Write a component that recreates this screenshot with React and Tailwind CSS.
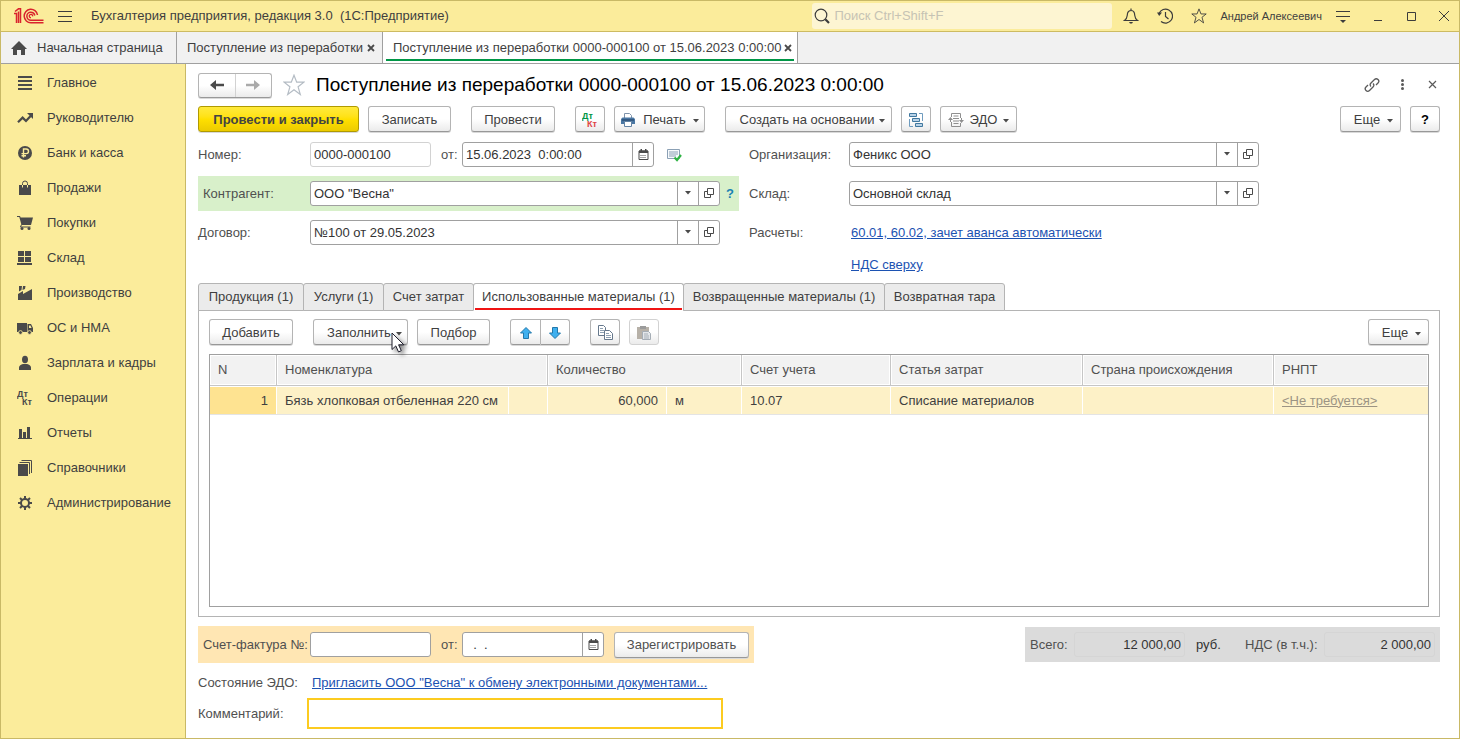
import { clsx } from 'clsx'

const sections = [
  { icon: MenuLinesIcon, label: 'Главное' },
  { icon: TrendIcon, label: 'Руководителю' },
  { icon: RubleIcon, label: 'Банк и касса' },
  { icon: BagIcon, label: 'Продажи' },
  { icon: CartIcon, label: 'Покупки' },
  { icon: BoxesIcon, label: 'Склад' },
  { icon: FactoryIcon, label: 'Производство' },
  { icon: TruckIcon, label: 'ОС и НМА' },
  { icon: PersonIcon, label: 'Зарплата и кадры' },
  { icon: DtKtIcon, label: 'Операции' },
  { icon: ChartIcon, label: 'Отчеты' },
  { icon: BooksIcon, label: 'Справочники' },
  { icon: GearIcon, label: 'Администрирование' },
]

const docTabs = [
  { label: 'Продукция (1)', width: 'w-[106px]' },
  { label: 'Услуги (1)', width: 'w-[81px]' },
  { label: 'Счет затрат', width: 'w-[91px]' },
  { label: 'Использованные материалы (1)', width: 'w-[211px]', active: true },
  { label: 'Возвращенные материалы (1)', width: 'w-[202px]' },
  { label: 'Возвратная тара', width: 'w-[121px]' },
]

/* ---------- Icons ---------- */

function Icon({ size = 16, children, className }) {
  return (
    <svg width={size} height={size} viewBox={`0 0 ${size} ${size}`} className={clsx('shrink-0', className)} fill="none" aria-hidden="true">
      {children}
    </svg>
  )
}

function MenuLinesIcon() {
  return <Icon><path d="M1 1h14v2H1zM1 5h14v2H1zM1 9h14v2H1zM1 13h14v2H1z" fill="#4a4a4a" /></Icon>
}

function TrendIcon() {
  return (
    <Icon>
      <path d="M1 12.2l4.6-4.6 3.4 3.4 4.6-5" stroke="#4a4a4a" strokeWidth="2.2" />
      <path d="M10 3h6v6z" fill="#4a4a4a" />
    </Icon>
  )
}

function RubleIcon() {
  return (
    <Icon>
      <circle cx="8" cy="8" r="7" fill="#4a4a4a" />
      <path d="M6.5 12.5V4h2.7a2.2 2.2 0 010 4.6H4.5M4.5 10.7H9" stroke="#fbec9b" strokeWidth="1.4" />
    </Icon>
  )
}

function BagIcon() {
  return (
    <Icon>
      <path d="M2 5h12v10H2z" fill="#4a4a4a" />
      <path d="M5.500 7V3.500a2.500 2.500 0 015 0V7" stroke="#4a4a4a" />
      <path d="M5.500 5v2.500M10.500 5v2.500" stroke="#fbec9b" />
    </Icon>
  )
}

function CartIcon() {
  return (
    <Icon>
      <path d="M0 1h3l.6 1.500H16L14 10H4.500L2.300 2H0z" fill="#4a4a4a" />
      <path d="M4.500 9.500L3.500 12h10" stroke="#4a4a4a" />
      <circle cx="5" cy="13.500" r="1.500" fill="#4a4a4a" />
      <circle cx="12" cy="13.500" r="1.500" fill="#4a4a4a" />
    </Icon>
  )
}

function BoxesIcon() {
  return <Icon><path d="M1 1h6v5H1zM8 1h6v5H8zM1 7h6v5H1zM8 7h6v5H8zM0 13h15v2H0z" fill="#4a4a4a" /></Icon>
}

function FactoryIcon() {
  return <Icon><path d="M1 15V9l5-3v3l9-5v11zM2 1h3l-.500 4L2 6.500zM6 1h2.500L8 4 5.500 5z" fill="#4a4a4a" /></Icon>
}

function TruckIcon() {
  return (
    <Icon>
      <path d="M0 3h10v9H0zM10.500 4H14l2 4v4h-5.500z" fill="#4a4a4a" />
      <path d="M12 5.500h1.500L14.600 8H12z" fill="#fbec9b" />
      <circle cx="3.500" cy="12.500" r="1.900" fill="#4a4a4a" stroke="#fbec9b" strokeWidth=".8" />
      <circle cx="12.500" cy="12.500" r="1.900" fill="#4a4a4a" stroke="#fbec9b" strokeWidth=".8" />
    </Icon>
  )
}

function PersonIcon() {
  return (
    <Icon>
      <ellipse cx="8" cy="4.500" rx="3" ry="3.800" fill="#4a4a4a" />
      <path d="M2 15v-2.500C2 10.500 4 9.800 6 9h4c2 .8 4 1.500 4 3.500V15z" fill="#4a4a4a" />
    </Icon>
  )
}

function DtKtIcon({ dt = '#4a4a4a', kt = '#4a4a4a' }) {
  return (
    <Icon>
      <text x="0" y="7" fontSize="9" fontWeight="bold" fill={dt}>Дт</text>
      <text x="5" y="15" fontSize="9" fontWeight="bold" fill={kt}>Кт</text>
    </Icon>
  )
}

function ChartIcon() {
  return <Icon><path d="M2 4h3v9h1V7h3v6h1V2h3v11h2v1H1v-1h1z" fill="#4a4a4a" /></Icon>
}

function BooksIcon() {
  return (
    <Icon>
      <path d="M1 4h10v12H1z" fill="#4a4a4a" />
      <path d="M2.500 2.500h10V14M4.500.500h10V13" stroke="#4a4a4a" />
    </Icon>
  )
}

function GearIcon() {
  return (
    <Icon>
      <circle cx="8" cy="8" r="4" stroke="#4a4a4a" strokeWidth="2" />
      <path d="M8 1v3M8 12v3M1 8h3M12 8h3M3 3l2 2M11 11l2 2M3 13l2-2M11 5l2-2" stroke="#4a4a4a" strokeWidth="2" />
    </Icon>
  )
}

function Logo() {
  return (
    <svg width="30" height="16" viewBox="0 0 30 16" fill="none" stroke="#d9232e" aria-label="1С">
      <path d="M0 5.500h2.500V15M1 3.500L4.500.800h2V15M4.500 3.500V15" strokeWidth="1.500" />
      <path d="M23.500 7a6.700 6.700 0 10-6.500 7.700h12.500" strokeWidth="1.500" />
      <path d="M20.800 7.500a4 4 0 10-3.800 4.700h12.500" strokeWidth="1.500" />
      <path d="M18.600 8.400a1.700 1.700 0 10-1.600 1.300" strokeWidth="1.300" />
    </svg>
  )
}

function StarIcon({ size, stroke }) {
  return (
    <svg width={size} height={size} viewBox="0 0 22 22" fill="none" className="shrink-0" aria-hidden="true">
      <path d="M11 1.200l2.700 7h7.200l-5.800 4.600 2.200 7.700-6.300-4.700-6.300 4.700 2.200-7.700L1.100 8.200h7.200z" stroke={stroke} strokeWidth="1.200" />
    </svg>
  )
}

function Caret({ className }) {
  return (
    <svg width="6" height="4" viewBox="0 0 6 4" className={clsx('shrink-0', className)} aria-hidden="true">
      <path d="M0 0h6L3 3.500z" fill="#4a4a4a" />
    </svg>
  )
}

function CalendarIcon() {
  return (
    <Icon size={11}>
      <path d="M1 2h9v8.500H1z" stroke="#4a4a4a" />
      <path d="M1 1.500h9V4H1zM2.500 0h1.500v2H2.500zM7 0h1.500v2H7z" fill="#4a4a4a" />
      <path d="M2.500 6.500h6M2.500 8.500h6" stroke="#4a4a4a" strokeDasharray="1 1" />
    </Icon>
  )
}

function OpenIcon() {
  return (
    <Icon size={10}>
      <path d="M3.500.500h6v6h-6zM3 3.500H.500v6h6V7" stroke="#4a4a4a" />
    </Icon>
  )
}

function PrinterIcon() {
  return (
    <Icon>
      <path d="M4.500 6V1.500h5l2 2V6" fill="#fff" stroke="#7f93aa" />
      <path d="M2.500 5.500h11L15 7v5H1V7z" fill="#4a77a3" />
      <path d="M2 8h12" stroke="#1f3f63" />
      <path d="M4.500 9.500h7v5h-7z" fill="#fff" stroke="#6484a5" />
    </Icon>
  )
}

function StructureIcon() {
  return (
    <Icon>
      <path d="M1.500 1.500h7v3h-7zM4.500 6.500h7v3h-7zM7.500 11.500h7v3h-7z" fill="#b9d3e8" stroke="#41789f" />
      <path d="M11 1.500h3.500V9M1.500 7v7.500H5" stroke="#6f9cbf" />
    </Icon>
  )
}

function ExchangeIcon() {
  return (
    <Icon>
      <path d="M3.500 5V1.500h9V6M3.500 10v4.500h9V11M5.500 4h5M5 6.500h6M5 9h6M5.500 11.500h5" stroke="#8f8f8f" />
      <path d="M0 8l2.500-3L5 8zM11 8h5l-2.500 3z" fill="#8f8f8f" />
      <path d="M2.500 7v3M13.500 6v3" stroke="#8f8f8f" />
    </Icon>
  )
}

function PostedIcon() {
  return (
    <Icon>
      <path d="M1.500 2.500h12v9h-12z" fill="#f7fafc" stroke="#8ba0b5" />
      <path d="M3 5h9M3 7h9M3 9h7" stroke="#8ba0b5" />
      <path d="M8.500 10.500l2.500 2.500 4-5" stroke="#2fb344" strokeWidth="2.200" />
    </Icon>
  )
}

function ArrowIcon({ down }) {
  return (
    <Icon size={14}>
      <path
        d={down ? 'M7 12.500L1.500 7h3V1.500h5V7h3z' : 'M7 1.500L1.500 7h3v5.500h5V7h3z'}
        fill="#3fb0ef"
        stroke="#2378ab"
      />
    </Icon>
  )
}

function CopyIcon() {
  return (
    <Icon>
      <path d="M1.500.500h5l2 2v8h-7z" fill="#fff" stroke="#66788c" />
      <path d="M3 3.500h3M3 5.500h4M3 7.500h4" stroke="#8fa1b3" />
      <path d="M7.500 5.500h5l3 3v6h-8z" fill="#fff" stroke="#66788c" />
      <path d="M9 8.500h3M9 10.500h5M9 12.500h5" stroke="#8fa1b3" />
    </Icon>
  )
}

function PasteIcon() {
  return (
    <Icon>
      <path d="M1 2h12v12H1z" fill="#b7b1a8" />
      <path d="M4 1h6v3H4z" fill="#9b9b9b" />
      <path d="M6.500 6.500h6l2 2v6h-8z" fill="#e4e7ea" stroke="#a5adb5" />
      <path d="M8 9h4M8 11h5M8 13h5" stroke="#a5adb5" />
    </Icon>
  )
}

function MousePointer() {
  return (
    <svg width="18" height="24" viewBox="0 0 18 24" className="pointer-events-none absolute -right-0.5 top-3 drop-shadow-[3px_3px_2px_rgba(0,0,0,0.45)]" aria-hidden="true">
      <path d="M1 1v16.500l3.800-3.600 2.700 6 2.800-1.200-2.700-5.900h5.200z" fill="#fff" stroke="#1d1d2b" />
    </svg>
  )
}

/* ---------- Controls ---------- */

function Button({ children, className, label, disabled }) {
  return (
    <button
      type="button"
      aria-label={label}
      disabled={disabled}
      className={clsx(
        'flex h-[26px] shrink-0 items-center justify-center rounded-[3px] border pt-px whitespace-nowrap',
        'bg-linear-to-b from-white from-50% to-[#ebebeb]',
        disabled ? 'border-[#d2d2d2]' : 'border-[#b4b4b4] border-b-[#989898] shadow-[0_1px_0_#d9d9d9]',
        className,
      )}
    >
      {children}
    </button>
  )
}

function FieldButton({ label, children }) {
  return (
    <button type="button" aria-label={label} className="flex w-[21px] shrink-0 items-center justify-center border-l border-[#a0a0a0] pb-px">
      {children}
    </button>
  )
}

function Field({ id, value, className, children }) {
  return (
    <div className={clsx('flex h-[25px] shrink-0 overflow-hidden rounded-[3px] border bg-white', className)}>
      <input id={id} defaultValue={value} className="min-w-0 flex-1 px-[3px] text-[#333] outline-none" />
      {children}
    </div>
  )
}

function LookupField({ id, value }) {
  return (
    <Field id={id} value={value} className="w-[410px] border-[#a0a0a0]">
      <FieldButton label="Выбрать"><Caret /></FieldButton>
      <FieldButton label="Открыть"><OpenIcon /></FieldButton>
    </Field>
  )
}

function DateField(props) {
  return (
    <Field {...props}>
      <FieldButton label="Календарь"><CalendarIcon /></FieldButton>
    </Field>
  )
}

/* ---------- Page parts ---------- */

function TitleBar() {
  return (
    <header className="flex h-[31px] shrink-0 items-center border-b border-[#cdbb62] bg-[#fbec9b] pl-[13px] pr-[7px]">
      <Logo />
      <button type="button" aria-label="Меню" className="ml-[13px]">
        <Icon><path d="M1 3.500h14M1 8.500h14M1 13.500h14" stroke="#3c3c3c" /></Icon>
      </button>
      <h1 className="ml-[18px] flex-1 whitespace-pre">Бухгалтерия предприятия, редакция 3.0  (1С:Предприятие)</h1>
      <label className="flex h-[26px] w-[300px] items-center gap-1 rounded-[3px] bg-[#fdf5d2] pl-[2px]">
        <Icon>
          <circle cx="7" cy="7" r="5.800" stroke="#3c3c3c" strokeWidth="1.200" />
          <path d="M11.300 11.300l3.700 3.700" stroke="#3c3c3c" strokeWidth="2.200" />
        </Icon>
        <input aria-label="Поиск" placeholder="Поиск Ctrl+Shift+F" className="min-w-0 flex-1 outline-none placeholder:text-[#c6c3b4]" />
      </label>
      <div className="ml-[11px] flex items-center gap-[18px]">
        <button type="button" aria-label="Уведомления">
          <Icon>
            <path d="M1.500 12.500c3-2 2.500-4 3-7C4.800 3.500 6 2.500 8 2.500s3.200 1 3.500 3c.5 3 0 5 3 7zM8 .500v2" stroke="#3c3c3c" strokeWidth="1.200" />
            <path d="M6 14h4l-1 1.500H7z" fill="#3c3c3c" />
          </Icon>
        </button>
        <button type="button" aria-label="История">
          <Icon>
            <path d="M2 5.500a7 7 0 112 8M8.500 4v4.500l3 2.500" stroke="#3c3c3c" strokeWidth="1.200" />
            <path d="M0 4.500h5L2.200 8z" fill="#3c3c3c" />
          </Icon>
        </button>
        <button type="button" aria-label="Избранное"><StarIcon size={16} stroke="#3c3c3c" /></button>
      </div>
      <span className="ml-[13px] text-[11px]">Андрей Алексеевич</span>
      <button type="button" aria-label="Настройки" className="ml-[13px]">
        <Icon>
          <path d="M1 3.500h14M1 8.500h14" stroke="#3c3c3c" />
          <path d="M5 12h6l-3 3z" fill="#3c3c3c" />
        </Icon>
      </button>
      <div className="ml-[19px] flex items-center gap-[17px]">
        <button type="button" aria-label="Свернуть"><Icon><path d="M4 12.500h8" stroke="#3c3c3c" /></Icon></button>
        <button type="button" aria-label="Развернуть"><Icon><path d="M4.500 4.500h8v8h-8z" stroke="#3c3c3c" /></Icon></button>
        <button type="button" aria-label="Закрыть"><Icon><path d="M3 3l10 10M13 3L3 13" stroke="#3c3c3c" /></Icon></button>
      </div>
    </header>
  )
}

function CloseTab() {
  return (
    <button type="button" aria-label="Закрыть вкладку" className="ml-auto">
      <Icon size={8}><path d="M1 1l6 6M7 1L1 7" stroke="#4a4a4a" strokeWidth="1.800" /></Icon>
    </button>
  )
}

function WindowTabs() {
  return (
    <nav className="flex h-8 shrink-0 border-b border-[#a0a0a0] bg-[#f1f1f1] whitespace-nowrap">
      <div className="flex w-[176px] items-center border-r border-[#a0a0a0] pl-[10px]">
        <Icon>
          <path d="M8 1L0 9h2v6h4v-5h4v5h4V9h2z" fill="#4a4a4a" />
        </Icon>
        <a href="#home" className="ml-[10px]">Начальная страница</a>
      </div>
      <div className="flex w-[206px] items-center border-r border-[#a0a0a0] pl-[10px] pr-[7px]">
        <a href="#list">Поступление из переработки</a>
        <CloseTab />
      </div>
      <div className="flex w-[415px] flex-col border-r border-[#a0a0a0] bg-white px-[3px] pb-[2px]">
        <div className="flex flex-1 items-center border-b-2 border-[#009646] pl-[7px] pr-[2px] pt-1">
          <a href="#doc">Поступление из переработки 0000-000100 от 15.06.2023 0:00:00</a>
          <CloseTab />
        </div>
      </div>
    </nav>
  )
}

function Sidebar() {
  return (
    <aside className="w-[185px] shrink-0 border-r border-[#c9b966] bg-[#fbec9b] pt-px">
      {sections.map(({ icon: SectionIcon, label }) => (
        <a key={label} href="#section" className="flex h-[35px] items-center gap-[14px] pl-4">
          <SectionIcon />
          <span>{label}</span>
        </a>
      ))}
    </aside>
  )
}

function DocHeader() {
  return (
    <div className="flex h-[26px] items-center">
      <div className="flex h-[25px] w-[74px] rounded-[3px] border border-[#b4b4b4] border-b-[#989898] bg-linear-to-b from-white from-50% to-[#ebebeb] shadow-[0_1px_0_#d9d9d9]">
        <button type="button" aria-label="Назад" className="flex flex-1 items-center justify-center border-r border-[#d2d2d2]">
          <Icon><path d="M1 8l6-5v3.700h8v2.600H7V13z" fill="#4a4a4a" /></Icon>
        </button>
        <button type="button" aria-label="Вперед" className="flex flex-1 items-center justify-center">
          <Icon><path d="M15 8L9 3v3.700H1v2.600h8V13z" fill="#aaa" /></Icon>
        </button>
      </div>
      <button type="button" aria-label="В избранное" className="ml-[11px]"><StarIcon size={22} stroke="#b4bcc4" /></button>
      <h2 className="ml-[11px] flex-1 text-[19px] text-black">Поступление из переработки 0000-000100 от 15.06.2023 0:00:00</h2>
      <div className="flex items-center gap-[14px]">
        <button type="button" aria-label="Ссылка">
          <Icon>
            <path d="M7 9.500c-1-1-1-2.500 0-3.500l3.500-3.500c1-1 2.500-1 3.500 0s1 2.500 0 3.500L12 8M9 6.500c1 1 1 2.500 0 3.500l-3.500 3.500c-1 1-2.500 1-3.500 0s-1-2.500 0-3.500L4 8" stroke="#5a5a5a" strokeWidth="1.300" />
          </Icon>
        </button>
        <button type="button" aria-label="Действия">
          <Icon>
            <circle cx="8.500" cy="3.500" r="1.500" fill="#5a5a5a" />
            <circle cx="8.500" cy="7.500" r="1.500" fill="#5a5a5a" />
            <circle cx="8.500" cy="11.500" r="1.500" fill="#5a5a5a" />
          </Icon>
        </button>
        <button type="button" aria-label="Закрыть документ">
          <Icon><path d="M5 4l7 7M12 4l-7 7" stroke="#5a5a5a" strokeWidth="1.200" /></Icon>
        </button>
      </div>
    </div>
  )
}

function CommandBar() {
  return (
    <div className="mt-2 flex gap-[9px]">
      <button
        type="button"
        className="h-[26px] w-[161px] shrink-0 rounded-[3px] border border-[#b09a00] bg-linear-to-b from-[#ffea3a] via-[#ffe000] to-[#eccb00] pt-px font-bold text-[#434343] shadow-[0_1px_0_#d9d9d9]"
      >
        Провести и закрыть
      </button>
      <Button className="w-[83px]">Записать</Button>
      <Button className="ml-[11px] w-[84px]">Провести</Button>
      <Button className="ml-[11px] w-[30px]" label="Проводки"><DtKtIcon dt="#009646" kt="#e04545" /></Button>
      <Button className="w-[91px] gap-[7px]"><PrinterIcon />Печать<Caret className="mt-0.5" /></Button>
      <Button className="ml-[11px] w-[167px] gap-[5px] pl-2">Создать на основании<Caret className="mt-0.5" /></Button>
      <Button className="w-[30px]" label="Структура подчиненности"><StructureIcon /></Button>
      <Button className="w-[77px] gap-[6px]"><ExchangeIcon />ЭДО<Caret className="mt-0.5" /></Button>
      <Button className="ml-auto w-[61px] gap-[7px] pl-[6px]">Еще<Caret className="mt-0.5" /></Button>
      <Button className="w-[30px] font-bold text-black" label="Справка">?</Button>
    </div>
  )
}

function DocFields() {
  return (
    <div className="mt-[10px] flex gap-[10px] text-[#505050]">
      <div className="flex w-[541px] shrink-0 flex-col gap-[9px]">
        <div className="flex items-center">
          <label htmlFor="number" className="w-28">Номер:</label>
          <Field id="number" value="0000-000100" className="w-[121px] border-[#d2d2d2]" />
          <label htmlFor="date" className="w-[31px] pl-[10px]">от:</label>
          <DateField id="date" value="15.06.2023  0:00:00" className="w-[192px] border-[#a0a0a0]" />
          <span className="ml-3"><PostedIcon /></span>
        </div>
        <div className="flex h-[35px] items-center bg-[#d8f0ca] pl-[5px]">
          <label htmlFor="partner" className="w-[107px]">Контрагент:</label>
          <LookupField id="partner" value='ООО "Весна"' />
          <button type="button" className="ml-[6px] font-bold text-[#1a82b4]">?</button>
        </div>
        <div className="flex items-center">
          <label htmlFor="contract" className="w-28">Договор:</label>
          <LookupField id="contract" value="№100 от 29.05.2023" />
        </div>
      </div>
      <div className="flex flex-col gap-[14px]">
        <div className="flex items-center">
          <label htmlFor="company" className="w-[100px]">Организация:</label>
          <LookupField id="company" value="Феникс ООО" />
        </div>
        <div className="flex items-center">
          <label htmlFor="store" className="w-[100px]">Склад:</label>
          <LookupField id="store" value="Основной склад" />
        </div>
        <div className="flex leading-[25px]">
          <span className="w-[102px]">Расчеты:</span>
          <div className="flex flex-col items-start gap-[7px]">
            <a href="#settlements" className="text-[#1c52b2] underline">60.01, 60.02, зачет аванса автоматически</a>
            <a href="#vat" className="text-[#1c52b2] underline">НДС сверху</a>
          </div>
        </div>
      </div>
    </div>
  )
}

const headCell = 'border-r border-b border-[#c6c6c6] bg-[#f2f2f2] px-2 text-left font-normal text-[#505050] shadow-[inset_0_0_0_1px_#fff] last:border-r-0'
const bodyCell = 'border-r border-t border-white bg-[#fdf1c7] px-2 whitespace-nowrap last:border-r-0'

function MaterialsTable() {
  return (
    <div className="mt-[9px] min-h-24 flex-1 overflow-hidden border border-[#a0a0a0] bg-white">
      <table className="w-full table-fixed border-separate border-spacing-0">
        <colgroup>
          <col className="w-[67px]" />
          <col className="w-[232px]" />
          <col className="w-[39px]" />
          <col className="w-[119px]" />
          <col className="w-[75px]" />
          <col className="w-[149px]" />
          <col className="w-[192px]" />
          <col className="w-[191px]" />
          <col />
        </colgroup>
        <thead>
          <tr className="h-[31px]">
            <th className={headCell}>N</th>
            <th className={headCell} colSpan={2}>Номенклатура</th>
            <th className={headCell} colSpan={2}>Количество</th>
            <th className={headCell}>Счет учета</th>
            <th className={headCell}>Статья затрат</th>
            <th className={headCell}>Страна происхождения</th>
            <th className={headCell}>РНПТ</th>
          </tr>
        </thead>
        <tbody>
          <tr className="h-[28px]">
            <td className="border-r border-t border-white bg-[#fee391] px-2 text-right">1</td>
            <td className={bodyCell}>Бязь хлопковая отбеленная 220 см</td>
            <td className={bodyCell} />
            <td className={clsx(bodyCell, 'text-right')}>60,000</td>
            <td className={bodyCell}>м</td>
            <td className={bodyCell}>10.07</td>
            <td className={bodyCell}>Списание материалов</td>
            <td className={bodyCell} />
            <td className={bodyCell}><a href="#rnpt" className="text-[#9c9484] underline">&lt;Не требуется&gt;</a></td>
          </tr>
        </tbody>
      </table>
      <div className="border-t border-[#e4e4e4]" />
    </div>
  )
}

function MaterialsPanel() {
  return (
    <section className="mt-[6px] flex flex-1 flex-col">
      <div role="tablist" className="flex items-end whitespace-nowrap">
        {docTabs.map(({ label, width, active }) => (
          <button
            key={label}
            type="button"
            role="tab"
            aria-selected={Boolean(active)}
            className={clsx(
              'z-10 -mb-px -mr-px h-7 rounded-t-[3px] border border-[#b4b4b4]',
              width,
              active ? 'border-b-white bg-white px-px' : 'bg-[#ebebeb]',
            )}
          >
            {active ? <span className="flex h-full items-center justify-center border-b-2 border-[#f01414] pt-[2px]">{label}</span> : label}
          </button>
        ))}
      </div>
      <div className="flex flex-1 flex-col border border-[#b4b4b4] px-[10px] pb-[9px] pt-2">
        <div className="flex gap-[9px]">
          <Button className="w-[84px]">Добавить</Button>
          <Button className="relative ml-[11px] w-[95px] gap-[5px] pl-2">
            Заполнить<Caret className="mt-0.5" />
            <MousePointer />
          </Button>
          <Button className="w-[73px]">Подбор</Button>
          <div className="ml-[11px] flex">
            <Button className="w-[31px] rounded-r-none" label="Вверх"><ArrowIcon /></Button>
            <Button className="w-[29px] rounded-l-none border-l-0" label="Вниз"><ArrowIcon down /></Button>
          </div>
          <Button className="ml-[11px] w-[30px]" label="Копировать"><CopyIcon /></Button>
          <Button className="w-[30px]" label="Вставить" disabled><PasteIcon /></Button>
          <Button className="ml-auto w-[61px] gap-[7px] pl-[6px]">Еще<Caret className="mt-0.5" /></Button>
        </div>
        <MaterialsTable />
      </div>
    </section>
  )
}

function Footer() {
  return (
    <footer className="mt-[9px] text-[#505050]">
      <div className="flex items-center justify-between">
        <div className="flex h-[37px] items-center bg-[#ffe6b3] px-[5px]">
          <label htmlFor="invoice" className="w-[107px] whitespace-nowrap">Счет-фактура №:</label>
          <Field id="invoice" value="" className="w-[121px] border-[#a0a0a0]" />
          <label htmlFor="invoice-date" className="w-[31px] pl-[10px]">от:</label>
          <DateField id="invoice-date" value="  .  ." className="w-[142px] border-[#a0a0a0]" />
          <Button className="ml-[10px] w-[135px]">Зарегистрировать</Button>
        </div>
        <div className="flex h-[35px] items-center bg-[#dbdbdb] px-[5px]">
          <label htmlFor="total" className="w-[44px]">Всего:</label>
          <input id="total" readOnly value="12 000,00" className="h-[25px] w-[111px] rounded-[3px] border border-[#d5d5d5] px-[3px] text-right text-[#333]" />
          <span className="ml-[11px] w-[49px] text-[#333]">руб.</span>
          <label htmlFor="vat-total" className="w-[79px]">НДС (в т.ч.):</label>
          <input id="vat-total" readOnly value="2 000,00" className="h-[25px] w-[111px] rounded-[3px] border border-[#d5d5d5] px-[3px] text-right text-[#333]" />
        </div>
      </div>
      <div className="mt-[10px] flex h-5 items-center">
        <span className="w-[114px]">Состояние ЭДО:</span>
        <a href="#edo" className="text-[#1c52b2] underline">Пригласить ООО "Весна" к обмену электронными документами...</a>
      </div>
      <div className="mt-[5px] flex items-center">
        <label htmlFor="comment" className="w-[109px]">Комментарий:</label>
        <input id="comment" className="h-[31px] w-[416px] border-2 border-[#fccb20] bg-white px-1 text-[#333] outline-none" />
      </div>
    </footer>
  )
}

export default function App() {
  return (
    <div className="flex min-h-screen flex-col border border-[#c9b966] bg-white font-['Liberation_Sans',Arial,sans-serif] text-[13px] leading-4 text-[#3f3f3f]">
      <TitleBar />
      <WindowTabs />
      <div className="flex flex-1">
        <Sidebar />
        <main className="flex min-w-0 flex-1 flex-col pb-[9px] pl-3 pr-[19px] pt-2">
          <DocHeader />
          <CommandBar />
          <DocFields />
          <MaterialsPanel />
          <Footer />
        </main>
      </div>
    </div>
  )
}
